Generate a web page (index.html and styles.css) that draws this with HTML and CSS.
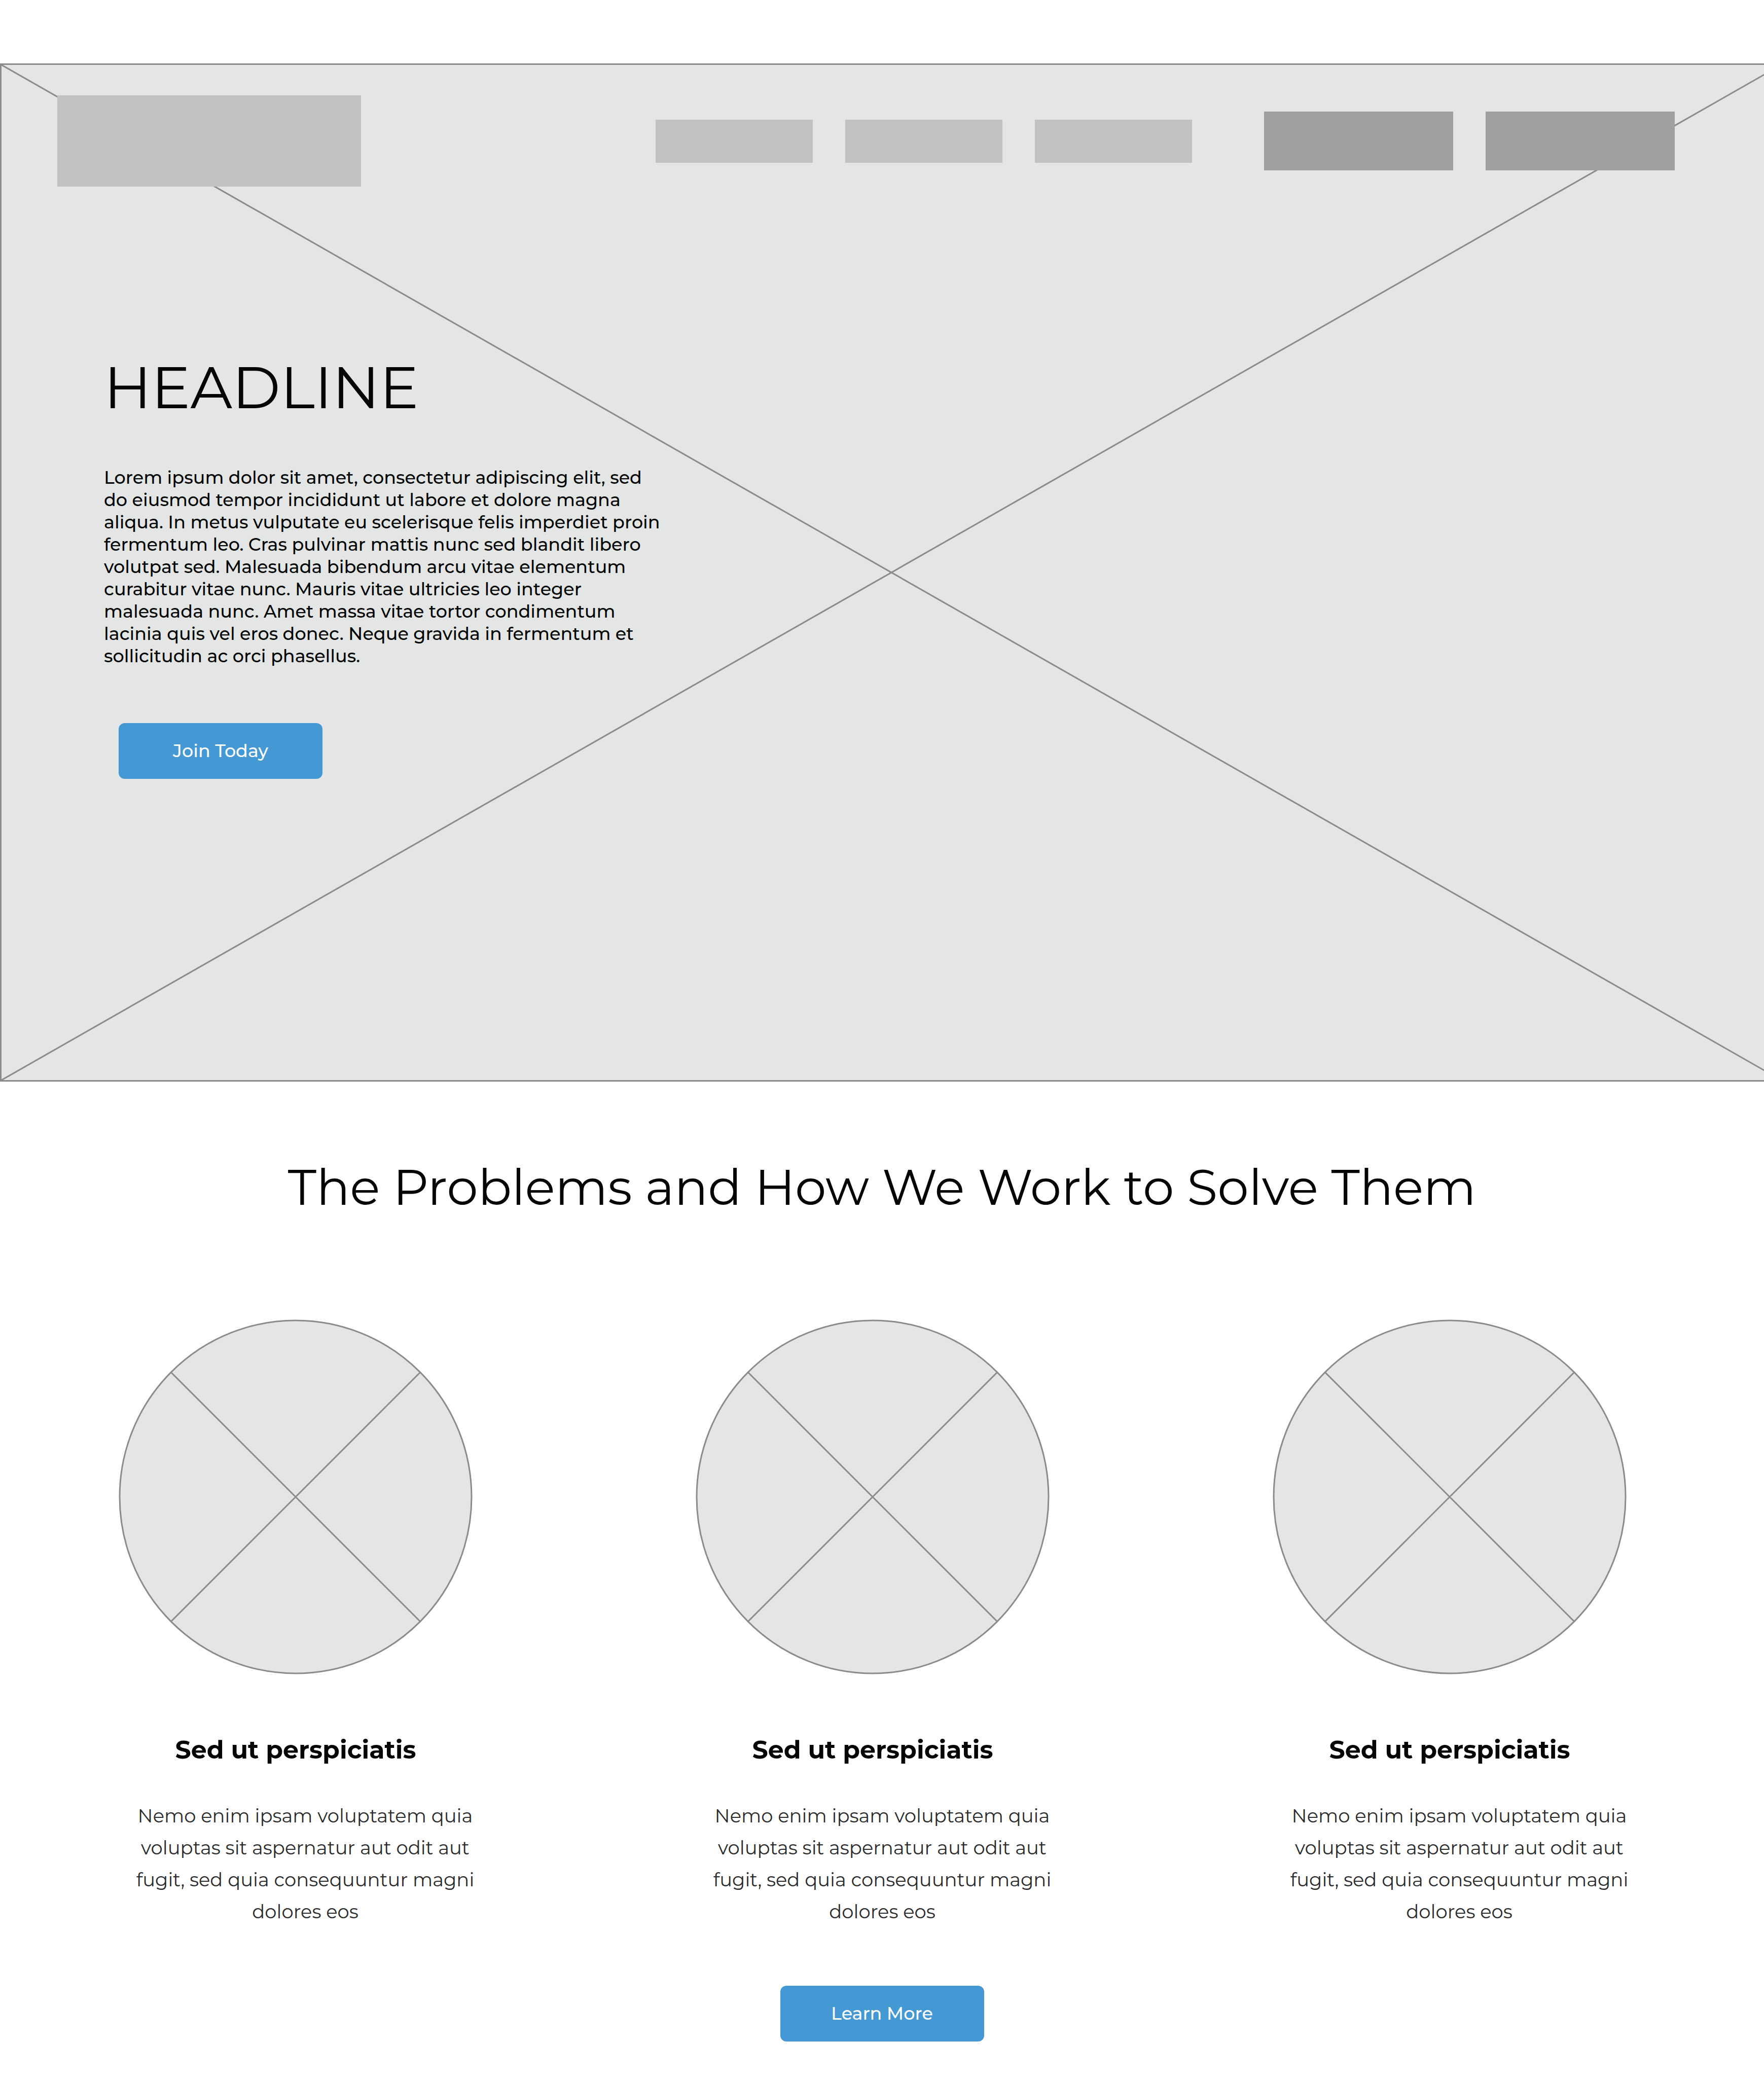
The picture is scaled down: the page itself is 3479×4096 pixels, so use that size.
FILE: index.html
```html
<!DOCTYPE html>
<html lang="en">
<head>
  <meta charset="utf-8">
  <meta name="viewport" content="width=device-width, initial-scale=1">
  <title>Landing page wireframe</title>
  <link rel="stylesheet" href="styles.css">
</head>
<body>
  <section class="hero">
    <svg class="hero-cross" aria-hidden="true">
      <line x1="0" y1="0" x2="100%" y2="100%"/>
      <line x1="0" y1="100%" x2="100%" y2="0"/>
    </svg>
    <header class="topbar">
      <a class="logo" href="#" aria-label="Home"></a>
      <nav class="menu" aria-label="Main">
        <a class="menu-item" href="#" aria-label="Menu item 1"></a>
        <a class="menu-item" href="#" aria-label="Menu item 2"></a>
        <a class="menu-item" href="#" aria-label="Menu item 3"></a>
      </nav>
      <div class="actions">
        <button class="action" type="button" aria-label="Action 1"></button>
        <button class="action" type="button" aria-label="Action 2"></button>
      </div>
    </header>
    <div class="intro">
      <h1 class="headline">HEADLINE</h1>
      <p class="lead">Lorem ipsum dolor sit amet, consectetur adipiscing elit, sed<br>
        do eiusmod tempor incididunt ut labore et dolore magna<br>
        aliqua. In metus vulputate eu scelerisque felis imperdiet proin<br>
        fermentum leo. Cras pulvinar mattis nunc sed blandit libero<br>
        volutpat sed. Malesuada bibendum arcu vitae elementum<br>
        curabitur vitae nunc. Mauris vitae ultricies leo integer<br>
        malesuada nunc. Amet massa vitae tortor condimentum<br>
        lacinia quis vel eros donec. Neque gravida in fermentum et<br>
        sollicitudin ac orci phasellus.</p>
      <button class="button" type="button">Join Today</button>
    </div>
  </section>

  <section class="problems">
    <h2 class="section-title">The Problems and How We Work to Solve Them</h2>
    <div class="cards">
      <article class="card">
        <svg class="picture" viewBox="0 0 698 700" aria-hidden="true">
          <ellipse cx="349" cy="350" rx="347" ry="348"/>
          <path d="M103 104 595 596M595 104 103 596"/>
        </svg>
        <h3 class="card-title">Sed ut perspiciatis</h3>
        <p class="card-text">Nemo enim ipsam voluptatem quia<br>voluptas sit aspernatur aut odit aut<br>fugit, sed quia consequuntur magni<br>dolores eos</p>
      </article>
      <article class="card">
        <svg class="picture" viewBox="0 0 698 700" aria-hidden="true">
          <ellipse cx="349" cy="350" rx="347" ry="348"/>
          <path d="M103 104 595 596M595 104 103 596"/>
        </svg>
        <h3 class="card-title">Sed ut perspiciatis</h3>
        <p class="card-text">Nemo enim ipsam voluptatem quia<br>voluptas sit aspernatur aut odit aut<br>fugit, sed quia consequuntur magni<br>dolores eos</p>
      </article>
      <article class="card">
        <svg class="picture" viewBox="0 0 698 700" aria-hidden="true">
          <ellipse cx="349" cy="350" rx="347" ry="348"/>
          <path d="M103 104 595 596M595 104 103 596"/>
        </svg>
        <h3 class="card-title">Sed ut perspiciatis</h3>
        <p class="card-text">Nemo enim ipsam voluptatem quia<br>voluptas sit aspernatur aut odit aut<br>fugit, sed quia consequuntur magni<br>dolores eos</p>
      </article>
    </div>
    <button class="button" type="button">Learn More</button>
  </section>
</body>
</html>
```
FILE: styles.css
```css
* {
  box-sizing: border-box;
}

body {
  margin: 0;
  padding-top: 125px;
  background: #fff;
  color: #040605;
  font-family: Montserrat, Inter, "Open Sans", sans-serif;
}

h1,
h2,
h3,
p {
  margin: 0;
}

/* Hero */
.hero {
  position: relative;
  overflow: hidden;
  padding: 60px 0 594px;
  border: solid #8d8b8a;
  border-width: 3px 0 3px 3px;
  background: #e4e6e5;
}

/* The placeholder frame runs on past the right edge of the window. */
.hero-cross {
  position: absolute;
  top: 0;
  left: 0;
  width: calc(100% + 34px);
  height: 100%;
  stroke: #8d8b8a;
  stroke-width: 3px;
}

.topbar {
  position: relative;
  display: flex;
  align-items: center;
  padding: 0 176px 0 110px;
}

.logo {
  width: 599px;
  height: 180px;
  background: #c2c2c2;
}

.menu {
  display: flex;
  gap: 64px;
  margin-left: auto;
}

.menu-item {
  width: 310px;
  height: 85px;
  background: #c2c2c2;
}

.actions {
  display: flex;
  gap: 64px;
  margin-left: 142px;
}

.action {
  width: 373px;
  height: 116px;
  padding: 0;
  border: 0;
  background: #a0a0a0;
}

.intro {
  position: relative;
  padding: 326px 0 0 202px;
}

.headline {
  margin-bottom: 86px;
  font-size: 115px;
  font-weight: 400;
  line-height: 140px;
}

.lead {
  margin-bottom: 110px;
  font-size: 35px;
  font-weight: 500;
  line-height: 44px;
}

.button {
  display: block;
  width: 402px;
  height: 110px;
  padding: 0;
  border: 0;
  border-radius: 12px;
  background: #4498d4;
  color: #fff;
  font-family: inherit;
  font-size: 35px;
  font-weight: 500;
  line-height: 44px;
}

.intro .button {
  margin-left: 29px;
}

/* Problems */
.problems {
  padding: 148px 0 70px;
}

.section-title {
  margin-bottom: 201px;
  font-size: 98px;
  font-weight: 400;
  line-height: 120px;
  text-align: center;
}

.cards {
  display: grid;
  grid-template-columns: repeat(3, 1fr);
  margin-bottom: 115px;
  padding: 0 51px 0 14px;
}

.card {
  display: flex;
  flex-direction: column;
  align-items: center;
  text-align: center;
}

.picture {
  width: 698px;
  height: 700px;
  fill: #e4e6e5;
  stroke: #8d8b8a;
  stroke-width: 3px;
}

.card-title {
  margin: 119px 0 68px;
  font-size: 49px;
  font-weight: 700;
  line-height: 60px;
}

.card-text {
  padding-left: 38px;
  color: #2b2b2b;
  font-size: 37px;
  line-height: 63px;
}

.problems .button {
  margin: 0 auto;
}
```
